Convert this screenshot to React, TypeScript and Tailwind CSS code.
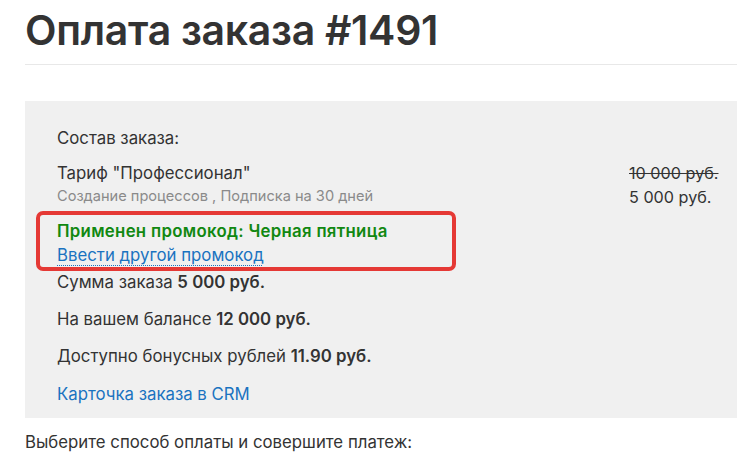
import React from 'react';

const App: React.FC = () => {
  return (
    <div className="min-h-[462px] bg-white pl-[25px] text-[#333] font-['Inter','Noto_Sans',sans-serif]">
      {/* Title */}
      <h1 className="pt-[4px] text-[41px] leading-[52px] font-semibold tracking-[-0.3px] text-[#333]">
        Оплата заказа #1491
      </h1>
      <div className="mt-[8px] h-px bg-[#e8e8e8]" />

      {/* Order box */}
      <div className="mt-[36px] bg-[#f0f0f0] pl-[32px] pt-[25px] pb-[12px] text-[16.8px] leading-[24px]">
        <div>Состав заказа:</div>

        <div className="mt-[11px] flex">
          <div>
            <div>Тариф "Профессионал"</div>
            <div className="text-[14.6px] leading-[22px] text-[#8a8a8a]">
              Создание процессов , Подписка на 30 дней
            </div>
          </div>
          <div className="ml-auto w-[108px] text-[16.2px]">
            <div className="line-through">10 000 руб.</div>
            <div>5 000 руб.</div>
          </div>
        </div>

        {/* Promo block with highlight */}
        <div className="relative mt-[10px]">
          <div className="pointer-events-none absolute left-[-21px] top-[-8px] h-[60px] w-[420px] rounded-[7px] border-[4px] border-[#e53935]" />
          <div className="font-semibold tracking-[0.3px] text-[#118811]">Применен промокод: Черная пятница</div>
          <a
            href="#"
            className="text-[#1a73c0] underline decoration-dotted decoration-1 decoration-[#1a73c0] underline-offset-[4px]"
          >
            Ввести другой промокод
          </a>
        </div>

        <div className="mt-[3px]">
          Сумма заказа <b className="font-semibold">5 000 руб.</b>
        </div>
        <div className="mt-[13px]">
          На вашем балансе <b className="font-semibold">12 000 руб.</b>
        </div>
        <div className="mt-[13px]">
          Доступно бонусных рублей <b className="font-semibold">11.90 руб.</b>
        </div>
        <div className="mt-[14px]">
          <a href="#" className="text-[#1a73c0]">Карточка заказа в CRM</a>
        </div>
      </div>

      <div className="mt-[12px] text-[16.8px] leading-[24px]">
        Выберите способ оплаты и совершите платеж:
      </div>
    </div>
  );
};

export default App;
